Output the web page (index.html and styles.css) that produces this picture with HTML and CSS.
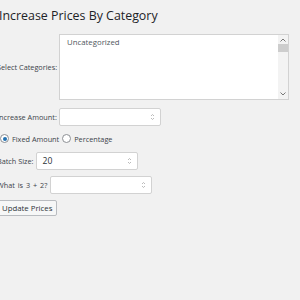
FILE: index.html
```html
<!DOCTYPE html>
<html>
<head>
    <title>Increase Prices By Category</title>
    <meta charset="utf-8">
    <link rel="stylesheet" href="styles.css">
</head>
<body>
<div class="wrap">
    <h2 class="title">Increase Prices By Category</h2>
    <form action="" onsubmit="return false;">
        <div class="row first">
            <label>Select Categories:</label>
            <div class="listbox">
                <div class="options">
                    <div class="option">Uncategorized</div>
                </div>
                <div class="scrollbar">
                    <svg class="arrow" width="6" height="4" viewBox="0 0 6 4"><path d="M0.5 3.5 L3 1 L5.5 3.5" fill="none" stroke="#777" stroke-width="1"/></svg>
                    <span class="thumb"></span>
                    <svg class="arrow down" width="6" height="4" viewBox="0 0 6 4"><path d="M0.5 0.5 L3 3 L5.5 0.5" fill="none" stroke="#777" stroke-width="1"/></svg>
                </div>
            </div>
        </div>
        <div class="row">
            <label>Increase Amount:</label>
            <div class="field"><span class="value"></span><svg class="spin" width="5" height="8" viewBox="0 0 5 8"><path d="M1 3 L2.5 1.5 L4 3 M1 5 L2.5 6.5 L4 5" fill="none" stroke="#aaa" stroke-width="0.8"/></svg></div>
        </div>
        <div class="row radios">
            <span class="radio checked"></span><label>Fixed Amount</label>
            <span class="radio"></span><label>Percentage</label>
        </div>
        <div class="row">
            <label>Batch Size:</label>
            <div class="field"><span class="value">20</span><svg class="spin" width="5" height="8" viewBox="0 0 5 8"><path d="M1 3 L2.5 1.5 L4 3 M1 5 L2.5 6.5 L4 5" fill="none" stroke="#aaa" stroke-width="0.8"/></svg></div>
        </div>
        <div class="row">
            <label class="captcha">What is 3 + 2?</label>
            <div class="field"><span class="value"></span><svg class="spin" width="5" height="8" viewBox="0 0 5 8"><path d="M1 3 L2.5 1.5 L4 3 M1 5 L2.5 6.5 L4 5" fill="none" stroke="#aaa" stroke-width="0.8"/></svg></div>
        </div>
        <button type="button" class="button">Update Prices</button>
    </form>
</div>
</body>
</html>
```

FILE: styles.css
```css
body {
    margin: 0;
    background: #f1f1f1;
    color: #3c434a;
    font-family: "Open Sans", "Noto Sans", sans-serif;
    font-size: 7.3px;
}

.wrap {
    margin-left: -3px;
    padding-top: 6px;
}

.title {
    margin: 0 0 8px 2px;
    font-size: 12.4px;
    font-weight: 400;
    color: #1d2327;
    line-height: 20px;
}

.row {
    display: flex;
    align-items: center;
    gap: 2px;
    margin-bottom: 6px;
}

.row.first {
    margin-bottom: 8px;
}

.listbox {
    display: flex;
    width: 230px;
    height: 66px;
    background: #fff;
    border: 1px solid #d2d2d2;
    box-sizing: border-box;
}

.options {
    flex: 1;
    padding: 2px 7px;
}

.option {
    color: #50575e;
    font-size: 7.8px;
}

.scrollbar {
    width: 10px;
    display: flex;
    flex-direction: column;
    align-items: center;
    background: #f3f3f3;
}

.arrow {
    margin: 3px 0 2px;
}

.arrow.down {
    margin: auto 0 3px;
}

.thumb {
    width: 10px;
    height: 8px;
    background: #cdcdcd;
}

.field {
    display: flex;
    flex-shrink: 0;
    align-items: center;
    justify-content: space-between;
    width: 102px;
    height: 18px;
    padding: 0 5px 0 6px;
    background: #fff;
    border: 1px solid #d2d2d2;
    border-radius: 2px;
    box-sizing: border-box;
    font-size: 8.6px;
    color: #2c3338;
}

.captcha {
    word-spacing: 1px;
    margin-right: 1px;
}

.radios {
    height: 13px;
    gap: 3px;
    margin-left: 3px;
    margin-bottom: 7px;
}

.radio {
    width: 9px;
    height: 9px;
    border: 1px solid #8c8f94;
    border-radius: 50%;
    background: #fff;
    box-sizing: border-box;
    position: relative;
}

.radio.checked::after {
    content: "";
    position: absolute;
    left: 1.5px;
    top: 1.5px;
    width: 4px;
    height: 4px;
    border-radius: 50%;
    background: #2271b1;
}

.button {
    margin-top: 0;
    height: 16px;
    padding: 0 4px;
    background: #f6f7f7;
    border: 1px solid #b9bcc0;
    border-radius: 2px;
    font-family: inherit;
    font-size: 7.8px;
    color: #2c3338;
}
```
